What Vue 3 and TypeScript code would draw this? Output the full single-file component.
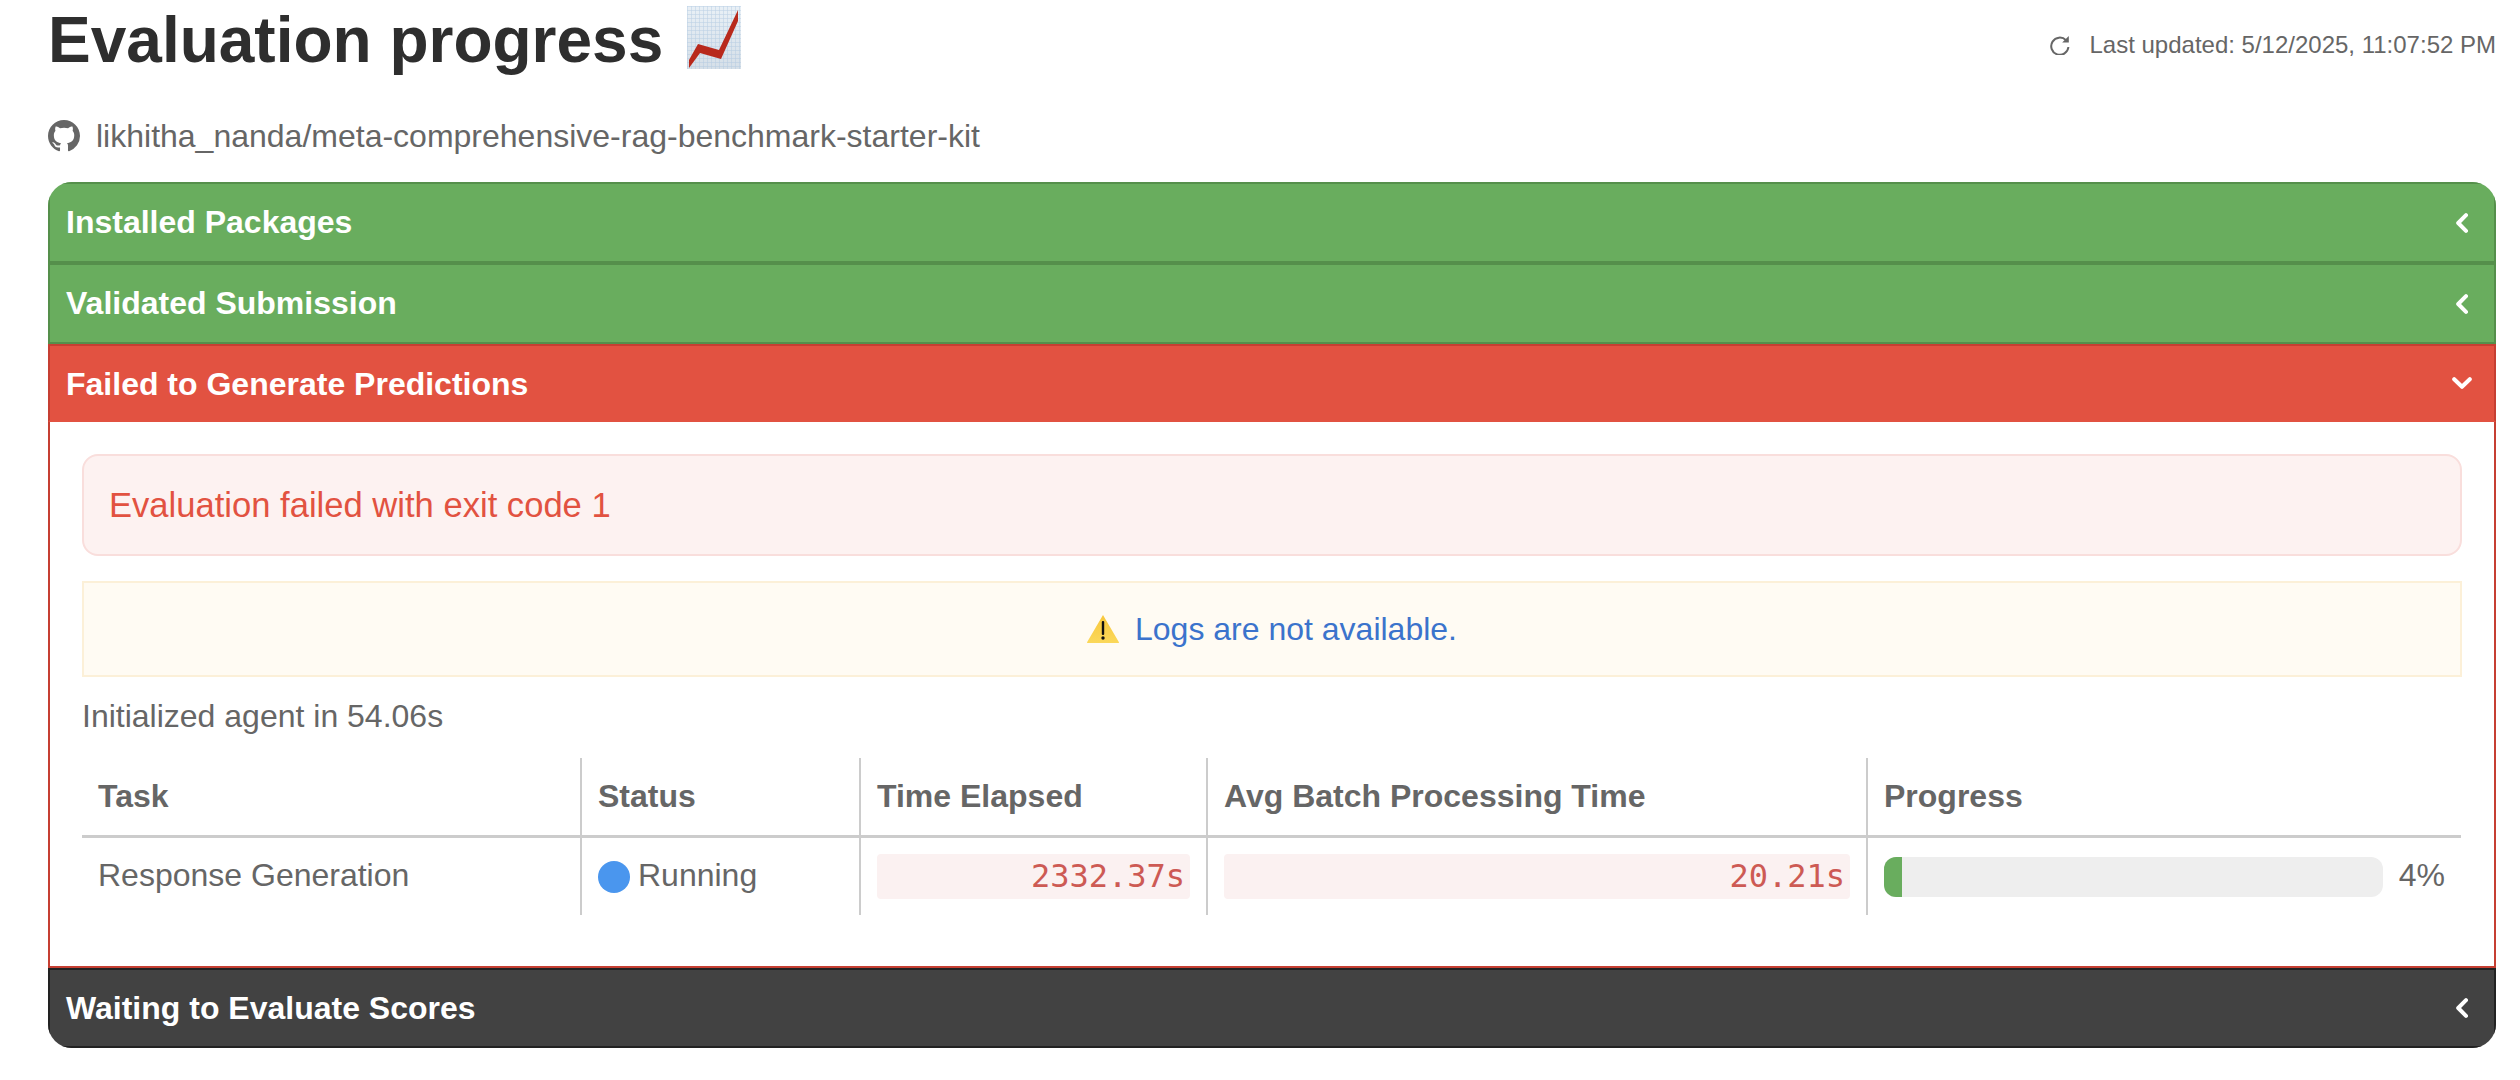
<script setup lang="ts">
interface Step { label: string; tone: string; open?: boolean }
const stepsBefore: Step[] = [
  { label: 'Installed Packages', tone: 'green' },
  { label: 'Validated Submission', tone: 'green' },
]
</script>

<template>
  <div class="page">
    <header class="top">
      <h1 class="title">
        Evaluation progress
        <svg class="chart" viewBox="0 0 54 63" aria-hidden="true">
          <defs>
            <pattern id="grid" width="4" height="4" patternUnits="userSpaceOnUse">
              <path d="M4 0H0V4" fill="none" stroke="#a9c3de" stroke-width="1" />
            </pattern>
            <linearGradient id="paper" x1="0" y1="0" x2="0" y2="1">
              <stop offset="0" stop-color="#e9f0f6" />
              <stop offset="1" stop-color="#d5dfe8" />
            </linearGradient>
          </defs>
          <rect width="54" height="63" fill="url(#paper)" />
          <rect width="54" height="63" fill="url(#grid)" opacity="0.75" />
          <polygon points="2,54 11,38 32,44 51,4 51,15 34,53 13,47 2,62" fill="#b8291c" />
        </svg>
      </h1>
      <div class="updated">
        <svg class="refresh" viewBox="0 0 20 20" aria-hidden="true">
          <path d="M16 5.2A8.6 8.6 0 1 0 18.4 12" fill="none" stroke="#666" stroke-width="2" />
          <path d="M18.8 1V7.6H12.2z" fill="#666" />
        </svg>
        <span>Last updated: 5/12/2025, 11:07:52 PM</span>
      </div>
    </header>

    <div class="repo">
      <svg class="github" viewBox="0 0 16 16" aria-hidden="true">
        <path fill="#666" d="M8 0C3.58 0 0 3.58 0 8c0 3.54 2.29 6.53 5.47 7.59.4.07.55-.17.55-.38 0-.19-.01-.82-.01-1.49-2.01.37-2.53-.49-2.69-.94-.09-.23-.48-.94-.82-1.13-.28-.15-.68-.52-.01-.53.63-.01 1.08.58 1.23.82.72 1.21 1.87.87 2.33.66.07-.52.28-.87.51-1.07-1.78-.2-3.64-.89-3.64-3.95 0-.87.31-1.59.82-2.15-.08-.2-.36-1.02.08-2.12 0 0 .67-.21 2.2.82.64-.18 1.32-.27 2-.27.68 0 1.36.09 2 .27 1.53-1.04 2.2-.82 2.2-.82.44 1.1.16 1.92.08 2.12.51.56.82 1.27.82 2.15 0 3.07-1.87 3.75-3.65 3.95.29.25.54.73.54 1.48 0 1.07-.01 1.93-.01 2.2 0 .21.15.46.55.38A8.013 8.013 0 0016 8c0-4.42-3.58-8-8-8z" />
      </svg>
      <span>likhitha_nanda/meta-comprehensive-rag-benchmark-starter-kit</span>
    </div>

    <section class="accordion">
      <div v-for="s in stepsBefore" :key="s.label" class="head" :class="s.tone">
        <span>{{ s.label }}</span>
        <svg class="chev" viewBox="0 0 12 20" aria-hidden="true"><path d="M10 2.2 2.2 10l7.8 7.8" /></svg>
      </div>

      <div class="head red">
        <span class="red-label">Failed to Generate Predictions</span>
        <svg class="chev-down" viewBox="0 0 20 12" aria-hidden="true"><path d="M2.2 2.2 10 9.8l7.8-7.6" /></svg>
      </div>

      <div class="panel">
        <div class="alert-error">Evaluation failed with exit code 1</div>
        <div class="alert-warn">
          <svg class="warn" viewBox="0 0 32 28" aria-hidden="true">
            <defs>
              <linearGradient id="amber" x1="0" y1="0" x2="0" y2="1">
                <stop offset="0" stop-color="#f8c73c" />
                <stop offset="1" stop-color="#fbd85a" />
              </linearGradient>
            </defs>
            <path d="M16 0 31.8 27a.6.6 0 0 1-.5 1H.7a.6.6 0 0 1-.5-1z" fill="url(#amber)" />
            <rect x="14.8" y="6" width="2.4" height="14" rx="1.1" fill="#111" />
            <circle cx="16" cy="23" r="1.7" fill="#111" />
          </svg>
          <span>Logs are not available.</span>
        </div>
        <p class="init">Initialized agent in 54.06s</p>

        <table class="tasks">
          <colgroup>
            <col class="c1" /><col class="c2" /><col class="c3" /><col class="c4" /><col class="c5" />
          </colgroup>
          <thead>
            <tr>
              <th>Task</th><th>Status</th><th>Time Elapsed</th><th>Avg Batch Processing Time</th><th>Progress</th>
            </tr>
          </thead>
          <tbody>
            <tr>
              <td><span class="label">Response Generation</span></td>
              <td><span class="status"><i class="dot"></i><span class="label">Running</span></span></td>
              <td><code class="time">2332.37s</code></td>
              <td><code class="time">20.21s</code></td>
              <td>
                <div class="progress">
                  <div class="track"><div class="fill" :style="{ width: '18px' }"></div></div>
                  <span class="label">4%</span>
                </div>
              </td>
            </tr>
          </tbody>
        </table>
      </div>

      <div class="head dark">
        <span>Waiting to Evaluate Scores</span>
        <svg class="chev" viewBox="0 0 12 20" aria-hidden="true"><path d="M10 2.2 2.2 10l7.8 7.8" /></svg>
      </div>
    </section>
  </div>
</template>

<style>
html, body { margin: 0; background: #fff; }
</style>

<style scoped>
.page {
  width: 2520px;
  box-sizing: border-box;
  padding: 0 24px 32px 48px;
  font-family: "Liberation Sans", Arial, sans-serif;
  color: #666;
  font-size: 32px;
}
.top {
  display: flex;
  justify-content: space-between;
  align-items: flex-start;
  height: 120px;
}
.title {
  margin: 0;
  display: flex;
  align-items: flex-start;
  gap: 24px;
  font-size: 64px;
  line-height: 80px;
  font-weight: 700;
  color: #2e2e2e;
}
.chart { width: 54px; height: 63px; margin-top: 6px; }
.updated {
  display: flex;
  align-items: center;
  gap: 19px;
  margin-top: 30px;
  font-size: 24px;
  line-height: 30px;
}
.refresh { width: 20px; height: 20px; }
.repo {
  display: flex;
  align-items: center;
  gap: 16px;
  height: 32px;
  margin-bottom: 30px;
}
.github { width: 32px; height: 32px; }
.accordion {
  border-radius: 24px;
  overflow: hidden;
}
.head {
  box-sizing: border-box;
  height: 81px;
  display: flex;
  justify-content: space-between;
  align-items: center;
  padding: 0 26px 0 16px;
  border: 2px solid;
  font-weight: 700;
  color: #fff;
}
.green { background: #69ad5e; border-color: #558f4b; }
.red { height: 78px; background: #e25241; border-color: #c63f32; border-bottom-color: #e25241; }
.red-label { padding-top: 2px; }
.dark { height: 80px; background: #424242; border-color: #222; }
.chev { width: 12px; height: 20px; fill: none; stroke: #fff; stroke-width: 4; stroke-linecap: round; stroke-linejoin: round; }
.chev-down { width: 20px; height: 12px; margin-right: -4px; fill: none; stroke: #fff; stroke-width: 4; stroke-linecap: round; stroke-linejoin: round; }
.panel {
  box-sizing: border-box;
  height: 546px;
  padding: 32px 32px 0;
  border: 2px solid #c63f32;
  border-top: 0;
  background: #fff;
}
.alert-error {
  box-sizing: border-box;
  height: 102px;
  display: flex;
  align-items: center;
  padding: 0 25px;
  background: #fdf2f1;
  border: 2px solid #f9dedc;
  border-radius: 16px;
  color: #e25241;
  font-size: 34.6px;
}
.alert-warn {
  box-sizing: border-box;
  height: 96px;
  margin-top: 25px;
  display: flex;
  align-items: center;
  justify-content: center;
  gap: 16px;
  background: #fffbf3;
  border: 2px solid #fcf0d8;
  color: #3b73cc;
}
.warn { width: 32px; height: 28px; }
.init {
  margin: 20px 0 0;
  height: 61px;
  line-height: 38px;
}
.tasks {
  width: 2379px;
  table-layout: fixed;
  border-collapse: collapse;
}
.c1 { width: 499px; }
.c2 { width: 279px; }
.c3 { width: 347px; }
.c4 { width: 660px; }
.c5 { width: 594px; }
th, td {
  padding: 0 16px;
  border-left: 2px solid #ccc;
  text-align: left;
}
th:first-child, td:first-child { border-left: 0; }
th {
  height: 77px;
  border-bottom: 3px solid #ccc;
  font-weight: 700;
}
td { height: 77px; }
.label { display: block; padding-bottom: 2px; }
.status { display: flex; align-items: center; gap: 8px; }
.dot { width: 32px; height: 32px; border-radius: 50%; background: #4a96ee; }
.time {
  display: block;
  box-sizing: border-box;
  height: 45px;
  line-height: 44px;
  padding: 0 5px;
  text-align: right;
  background: #fbf1f1;
  border-radius: 4px;
  color: #cd5a54;
  font-family: "DejaVu Sans Mono", monospace;
  font-size: 32px;
}
.progress { display: flex; align-items: center; gap: 16px; }
.track {
  width: 500px;
  height: 40px;
  border-radius: 12px;
  overflow: hidden;
  background: #eee;
}
.fill { height: 100%; background: #69ad5e; }
</style>
